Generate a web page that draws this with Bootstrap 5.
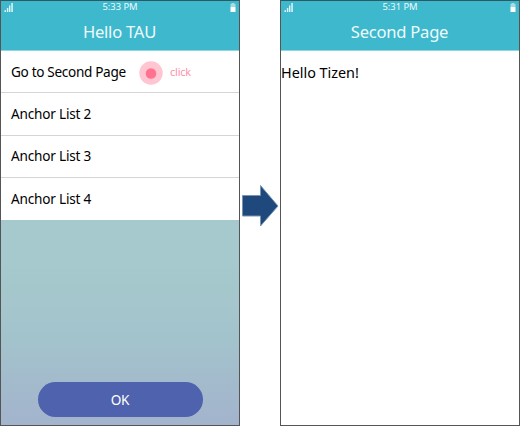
<!DOCTYPE html>
<html lang="en">
<head>
<meta charset="utf-8">
<meta name="viewport" content="width=device-width, initial-scale=1">
<title>Hello TAU</title>
<link href="https://cdn.jsdelivr.net/npm/bootstrap@5.3.0/dist/css/bootstrap.min.css" rel="stylesheet">
<style>
body{width:520px;height:426px;overflow:hidden;background:#fff;color:#000;font-family:"Noto Sans","Open Sans",sans-serif}
.phone{width:240px;height:426px;border:1px solid #555;border-top-color:#2f5961;background:#fff}
.phone-start{background:linear-gradient(#a5c9cc 0,#a5c9cc 62%,#a3c3cc 80%,#a3b9cc 92%,#a3b4cd 100%)}
.top-area{height:50px;background:#3db8cc;color:#eefafc;border-bottom:1px solid #8fd5e0}
.status{height:13px;padding:0 3px}
.status svg{margin-top:1px}
.clock{font-size:9.4px;line-height:12px;margin-right:3px}
.page-title{height:36px;font-size:16.6px;line-height:35px;letter-spacing:-.25px;padding-right:1px}
.list-group-item.anchor{height:42.3px;padding:0 10px;border-color:#d5d5d5;color:#000;font-size:13.6px;letter-spacing:-.2px;line-height:20px}
.list-group-item.anchor:last-child{border-bottom:0}
.tap-label{width:128px;letter-spacing:-.33px}
.tap-dot{margin-top:2px}
.click-note{font-size:10.8px;letter-spacing:-.15px;color:#ff8fa8;margin-left:7px;margin-top:1px}
.ok-btn{width:165px;height:35px;background:#4e62ad;color:#fff;font-size:13.6px;letter-spacing:-.3px;margin:auto 37px 7.7px 36.5px}
.hello{font-size:14.4px;letter-spacing:-.02px;line-height:20px;padding-top:12px}
.gap-col{width:40px}
</style>
<script src="https://cdn.jsdelivr.net/npm/bootstrap@5.3.0/dist/js/bootstrap.bundle.min.js"></script>
</head>
<body>
<svg width="0" height="0" class="position-absolute">
<symbol id="signal" viewBox="0 0 9 10"><path d="M.5 8.2H2V10H.5zM2.9 6h1.4v4H2.9zM5 3.5h1.4V10H5zM7.3 1h1.5v9H7.3z" fill="#e3f6f9"/></symbol>
<symbol id="battery" viewBox="0 0 6 10"><path d="M1.5 1h3v1h1v3h-5V2h1z" fill="#a5dde6"/><path d="M.5 5h5v5h-5z" fill="#fff"/></symbol>
</svg>
<main class="d-flex">
<section class="phone phone-start d-flex flex-column">
<header class="top-area">
<div class="status d-flex justify-content-between"><svg width="9" height="10"><use href="#signal"/></svg><span class="clock">5:33 PM</span><svg width="6" height="10"><use href="#battery"/></svg></div>
<div class="page-title text-center">Hello TAU</div>
</header>
<div class="list-group list-group-flush">
<a class="list-group-item anchor d-flex align-items-center"><span class="tap-label">Go to Second Page</span><svg class="tap-dot" width="24" height="24"><circle cx="12" cy="12" r="11.7" fill="#ffc5d1"/><circle cx="12" cy="12.5" r="5.3" fill="#ff7390"/></svg><span class="click-note">click</span></a>
<a class="list-group-item anchor d-flex align-items-center">Anchor List 2</a>
<a class="list-group-item anchor d-flex align-items-center">Anchor List 3</a>
<a class="list-group-item anchor d-flex align-items-center">Anchor List 4</a>
</div>
<button class="ok-btn btn rounded-pill border-0 p-0">OK</button>
</section>
<div class="gap-col"><svg class="d-block" width="40" height="426"><path d="M2.5 195.5H20.5V185.5L38 206L20.5 226V216H2.5z" fill="#1f497d" stroke="#7893b5" stroke-width="1"/></svg></div>
<section class="phone">
<header class="top-area">
<div class="status d-flex justify-content-between"><svg width="9" height="10"><use href="#signal"/></svg><span class="clock">5:31 PM</span><svg width="6" height="10"><use href="#battery"/></svg></div>
<div class="page-title text-center">Second Page</div>
</header>
<div class="hello">Hello Tizen!</div>
</section>
</main>
</body>
</html>
